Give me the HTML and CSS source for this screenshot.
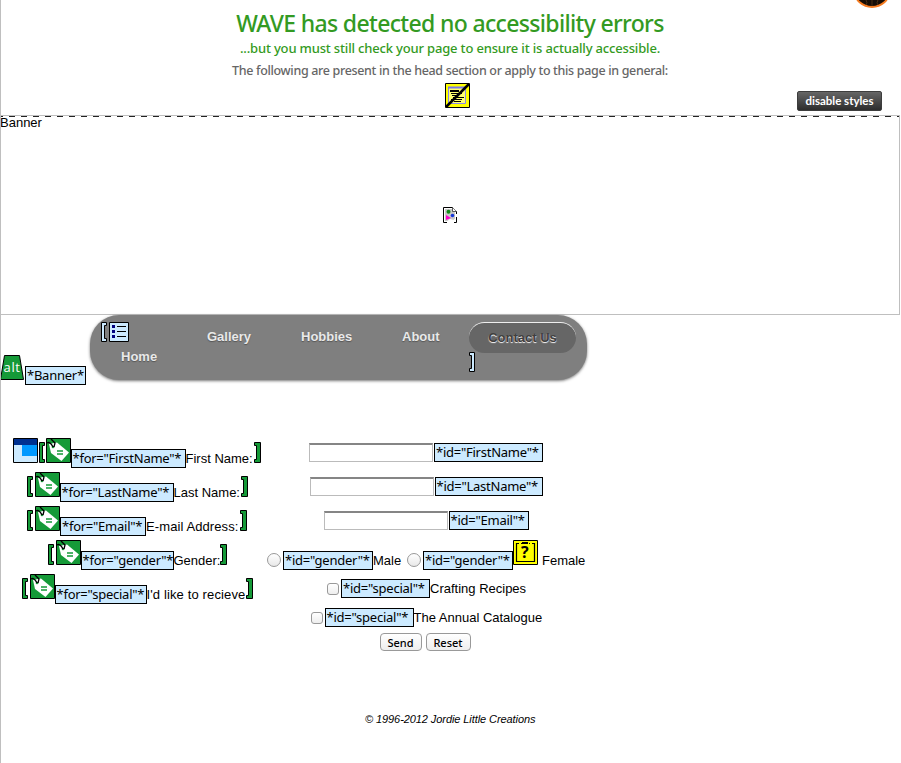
FILE: index.html
```html
<!DOCTYPE html>
<html lang="en">
<head>
<meta charset="utf-8">
<title>Contact Us</title>
<link rel="stylesheet" href="styles.css">
</head>
<body>
<svg class="defs" width="0" height="0">
  <symbol id="tag" viewBox="0 0 25 25"><path fill="#159a38" stroke="#000" d="M.5.5h24v24H.5z"/><path fill="#fff" d="M3 6l8-1.500 12 10-7.500 8.500L5 15z"/><path fill="none" stroke="#159a38" stroke-width="1.600" d="M11 13h6M11 16h6"/><circle cx="7" cy="9" r="1.300" fill="#159a38"/><path fill="none" stroke="#000" stroke-width="1.300" d="M1 5q3-2 6 4M5 1l4 4-1 4"/></symbol>
  <symbol id="open" viewBox="0 0 7 21"><path fill="#159a38" stroke="#000" d="M.5.500h5v3h-2v14h2v3h-5z"/></symbol>
  <symbol id="close" viewBox="0 0 7 21"><path fill="#159a38" stroke="#000" d="M6.500.500h-6v3h2v14h-2v3h6z"/></symbol>
</svg>
<div class="page">
  <header class="report">
    <svg class="spider" width="32" height="8" viewBox="0 0 32 8"><ellipse cx="16" cy="-8" rx="17" ry="15" fill="#160c05" stroke="#f47a20" stroke-width="2"/><path d="M10 0q2 3 0 5M16 0v6M22 0q-2 3 0 5" stroke="#4b2e15" fill="none"/></svg>
    <h1>WAVE has detected no accessibility errors</h1>
    <p class="warn">...but you must still check your page to ensure it is actually accessible.</p>
    <p class="general">The following are present in the head section or apply to this page in general:</p>
    <svg class="noscript" width="25" height="25"><path fill="#ff0" stroke="#000" d="M.5.500h24v24H.5z"/><path fill="#ffff70" stroke="#8888ed" d="M3.500 4.500h17v16h-17z"/><path stroke="#7777e8" stroke-width="2" d="M3 4.500h18"/><path stroke="#000" stroke-width="2" d="M5 8h9"/><path stroke="#000" d="M6 10.500h11M7 12.500h7M8 14.500h11M6 16.500h11M9 18.500h7"/><path stroke="#000" stroke-width="2.500" d="M1 24L24 1"/></svg>
    <span class="disable"><span>disable styles</span></span>
  </header>
  <section class="banner">
    <span>Banner</span>
    <svg width="14" height="16"><path fill="#fff" stroke="#000" d="M4 15.500H.500V.500h9l4 4V7M13.500 10v5.500H11"/><path fill="#c8c8c8" d="M2 2h8l2 4v6l-3 2H2z"/><path fill="#fff" stroke="#333" stroke-width=".8" d="M9.500.500v4h4"/><circle cx="5.500" cy="4.800" r="2" fill="#118a16"/><path fill="#f0c" d="M3 8l5 3-5 2z"/><circle cx="9.500" cy="8.500" r="1.800" fill="#1737d9"/><path fill="#fff" d="M3 15l4-3 4 1 2-3v5z"/></svg>
  </section>
  <div class="menu">
    <div class="alt">
      <svg width="25" height="26"><path d="M4.500.500h15l4 24H.5z" fill="#159a38" stroke="#000"/><text x="3.500" y="17" class="alttext" textLength="16.500">alt</text></svg>
      <span class="code banner-code">*Banner*</span>
    </div>
    <nav>
      <div class="first">
        <svg width="28" height="20"><path fill="#cceaff" stroke="#000" d="M.5.500h5v3h-2v13h2v3h-5zM8.500.500h19v19h-19z"/><path fill="#00007f" d="M11 3h3v3h-3zM11 8h3v3h-3zM11 13h3v3h-3z"/><path stroke="#000" d="M16 4.500h9M16 9.500h9M16 14.500h9"/></svg>
        <a>Home</a>
      </div>
      <a class="g">Gallery</a><a class="h">Hobbies</a><a class="a">About</a>
      <div class="last">
        <a class="pill">Contact Us</a>
        <svg width="6" height="20"><path fill="#cceaff" stroke="#000" d="M5.500.500h-5v3h2v13h-2v3h5z"/></svg>
      </div>
    </nav>
  </div>
  <form>
    <div class="labels">
      <div class="row"><svg class="icon win" width="26" height="25"><path fill="#cceaff" stroke="#000" d="M.5.500h24v24H.5z"/><path fill="#003090" d="M1 1h23v6H1z"/><path fill="#0098ff" d="M9 7h15v11H9z"/></svg><svg class="br"><use href="#open"/></svg><svg class="icon"><use href="#tag"/></svg><span class="code w1">*for="FirstName"*</span><label class="t1">First Name:</label><svg class="br"><use href="#close"/></svg></div>
      <div class="row"><svg class="br"><use href="#open"/></svg><svg class="icon"><use href="#tag"/></svg><span class="code w2">*for="LastName"*</span><label class="t2">Last Name:</label><svg class="br"><use href="#close"/></svg></div>
      <div class="row"><svg class="br"><use href="#open"/></svg><svg class="icon"><use href="#tag"/></svg><span class="code w3">*for="Email"*</span><label class="t3">E-mail Address:</label><svg class="br"><use href="#close"/></svg></div>
      <div class="row"><svg class="br"><use href="#open"/></svg><svg class="icon"><use href="#tag"/></svg><span class="code w4">*for="gender"*</span><label class="t4">Gender:</label><svg class="br"><use href="#close"/></svg></div>
      <div class="row"><svg class="br"><use href="#open"/></svg><svg class="icon"><use href="#tag"/></svg><span class="code w3">*for="special"*</span><label class="t5">I'd like to recieve</label><svg class="br"><use href="#close"/></svg></div>
    </div>
    <div class="fields">
      <div class="row field"><input type="text"><span class="code i1">*id="FirstName"*</span></div>
      <div class="row field"><input type="text"><span class="code i2">*id="LastName"*</span></div>
      <div class="row field"><input type="text"><span class="code i3">*id="Email"*</span></div>
      <div class="row gender"><input type="radio"><span class="code i4">*id="gender"*</span><label class="male">Male</label><input type="radio"><span class="code i4">*id="gender"*</span><svg class="icon" width="25" height="25"><path fill="#ff0" stroke="#000" d="M.5.500h24v24H.5z"/><path fill="none" stroke="#000" stroke-width="1.200" d="M6 3.500H3.500v18h18v-18H19M8 3.500h1M16 3.500h1"/><path d="M9 2h6v2H9z"/><text x="8" y="18" class="question">?</text></svg><label class="female">Female</label></div>
      <div class="row check"><input type="checkbox"><span class="code i5">*id="special"*</span><label class="c1">Crafting Recipes</label></div>
      <div class="row check"><input type="checkbox"><span class="code i5">*id="special"*</span><label class="c2">The Annual Catalogue</label></div>
      <div class="row buttons"><button type="button" class="send">Send</button><button type="button">Reset</button></div>
    </div>
  </form>
  <footer>© 1996-2012 Jordie Little Creations</footer>
</div>
</body>
</html>
```
FILE: styles.css
```css
* { box-sizing: border-box; }
body { margin: 0; background: #fff; color: #000; font: 13px/15px "Liberation Sans", Arial, sans-serif; }
.defs { position: absolute; }
.page { width: 901px; height: 763px; border-left: 1px solid #bfbfbf; overflow: hidden; }
svg { display: block; flex: none; }
h1, p { margin: 0; font-weight: 500; white-space: nowrap; }

.report { position: relative; height: 115px; width: 898px; display: flex; flex-direction: column; align-items: center; font-family: "Noto Sans", "Open Sans", sans-serif; }
h1 { margin-top: 7px; height: 33px; font-size: 23px; line-height: 33px; color: #339a22; letter-spacing: -.66px; }
.warn { height: 17px; line-height: 17px; color: #339a22; letter-spacing: -.17px; }
.general { height: 26px; line-height: 27px; font-size: 12.5px; color: #666; letter-spacing: -.33px; }
.noscript { margin-left: 14px; }
.spider { position: absolute; top: 0; right: 11px; }
.disable { position: absolute; left: 796px; top: 91px; width: 85px; height: 20px; border-radius: 2px; background: linear-gradient(#666, #2d2d2d); border: 1px solid #3d3d3d; color: #fff; font: bold 11.5px/18px Lato, sans-serif; text-align: center; white-space: nowrap; }

.banner { height: 200px; width: 899px; border: 1px solid #bfbfbf; border-left: 0; display: grid; grid-template: 91px 1fr / 1fr; background: linear-gradient(90deg, #222 6px, transparent 6px) 8px 0 / 12px 1px repeat-x; }
.banner span { margin-left: -1px; line-height: 14px; }
.banner svg { justify-self: start; margin-left: 442px; }

.menu { display: flex; height: 123px; }
.alt { width: 89px; display: flex; padding-top: 40px; margin-left: -1px; margin-right: 1px; }
.alttext { font: 500 13px "Open Sans", sans-serif; fill: #fff; }
nav { width: 497px; height: 65px; padding-left: 11px; border-radius: 29px; background: #7f7f7f; box-shadow: 0 1px 3px #777; display: flex; color: #e9e9e9; font-weight: bold; text-shadow: 0 1px 1px #555; }
nav a { height: 15px; margin-top: 14px; white-space: nowrap; }
.first { width: 106px; padding-top: 7px; }
.first a { display: block; margin: 7px 0 0 20px; }
.g { width: 94px; }
.h { width: 101px; }
.a { width: 67px; }
.last { padding-top: 7px; }
.last .pill { display: block; width: 107px; height: 31px; margin: 0; border-top: 1px solid #eee; border-radius: 16px; background: #666; color: #404040; text-align: center; line-height: 30px; text-shadow: 0 1px 1px #fff; }
.last svg { margin-top: -1px; }

.code { flex: none; height: 19px; padding-left: 1px; border: 1px solid #000; background: #cceaff; font: 13px/16px "Noto Sans", "Open Sans", sans-serif; white-space: nowrap; letter-spacing: -.25px; }
.banner-code { width: 61px; margin-top: 11px; }
form { height: 274px; display: flex; margin-left: 7px; }
.labels { width: 259px; padding-right: 2px; }
.fields { width: 318px; }
.row { display: flex; height: 34px; justify-content: center; align-items: flex-start; white-space: nowrap; }
.icon { width: 25px; height: 25px; }
.win { width: 26px; }
.br { width: 7px; height: 21px; margin-top: 4px; }
.labels .row + .row { padding-left: 1px; }
.labels .row + .row .br:first-child { margin-right: 1px; }
.labels .code { margin-top: 11px; }
.labels label { margin-top: 13px; flex: none; }
.w1 { width: 115px; } .w2 { width: 114px; } .w3 { width: 86px; } .w4 { width: 93px; } .labels .row:last-child .code { width: 92px; }
.t1 { width: 68px; } .t2 { width: 67px; } .t3 { width: 94px; letter-spacing: .1px; } .t4 { width: 46px; } .t5 { width: 99px; letter-spacing: .13px; }
.field { padding-top: 5px; gap: 2px; }
input { margin: 0; flex: none; appearance: none; background: #fff; }
input[type=text] { width: 124px; margin-right: -1px; height: 19px; border: 1px solid #bbb; border-top: 2px solid #858585; }
.i1 { width: 109px; } .i2 { width: 108px; } .i3 { width: 80px; } .i4 { width: 90px; } .i5 { width: 89px; }
.gender .code { margin-top: 11px; }
input[type=radio] { width: 14px; height: 14px; margin: 13px 2px 0 0; border: 1px solid #999; border-radius: 50%; background: linear-gradient(#fff, #e8e8e8); }
.gender label { margin-top: 13px; }
.male { width: 34px; }
.female { width: 47px; padding-left: 4px; }
.question { font: bold 16px "Open Sans", sans-serif; }
.check { height: 29px; padding-top: 5px; }
.check label { margin-top: 2px; }
input[type=checkbox] { width: 12px; height: 12px; margin: 4px 2px 0 0; border: 1px solid #999; border-radius: 3px; background: linear-gradient(#fff, #eee); }
.c1 { width: 95px; } .c2 { width: 128px; }
.buttons { gap: 4px; padding: 1px 2px 0 0; height: 20px; }
button { width: 45px; height: 18px; padding: 0; border: 1px solid #999; border-radius: 4px; background: linear-gradient(#fff, #eee); font: 500 11px/15px "Noto Sans", sans-serif; color: #000; }
.send { width: 42px; }
footer { margin: 0 0 0 364px; font: italic 11px/14px "Liberation Sans", Arial, sans-serif; letter-spacing: -.08px; }
```
